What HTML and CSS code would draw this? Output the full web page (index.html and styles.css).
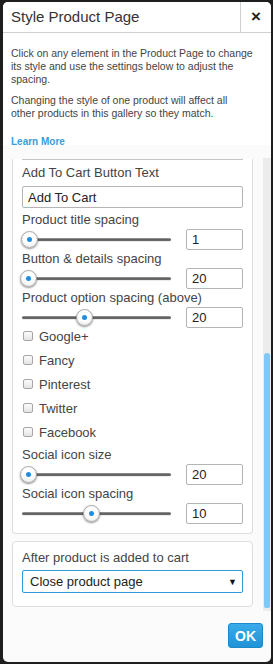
FILE: index.html
```html
<!DOCTYPE html>
<html lang="en">
<head>
  <meta charset="UTF-8" />
  <title>Style Product Page</title>
  <link rel="stylesheet" href="styles.css">
</head>
<body>
  <div class="dialog">
    <div class="dialog-header">
      <h1>Style Product Page</h1>
      <button class="close-btn">&times;</button>
    </div>

    <div class="intro">
      <p>Click on any element in the Product Page to change its style and use the settings below to adjust the spacing.</p>
      <p>Changing the style of one product will affect all<br>other products in this gallery so they match.</p>
      <a href="#" class="learn-more">Learn More</a>
    </div>

    <div class="scroll-area">
      <div class="scroll-content">
        <!-- card is scrolled, top part hidden -->
        <div class="card card-cut">
          <div class="cut-line"></div>
          <label class="field-label first">Add To Cart Button Text</label>
          <input class="text-input" type="text" value="Add To Cart">

          <label class="field-label">Product title spacing</label>
          <div class="slider-row">
            <div class="slider"><span class="thumb" style="left: -1px"></span></div>
            <input class="num-input" type="text" value="1">
          </div>

          <label class="field-label">Button &amp; details spacing</label>
          <div class="slider-row">
            <div class="slider"><span class="thumb" style="left: -2px"></span></div>
            <input class="num-input" type="text" value="20">
          </div>

          <label class="field-label">Product option spacing (above)</label>
          <div class="slider-row">
            <div class="slider"><span class="thumb" style="left: 54px"></span></div>
            <input class="num-input" type="text" value="20">
          </div>

          <div class="check-list">
            <div class="check-row"><span class="check-box"></span>Google+</div>
            <div class="check-row"><span class="check-box"></span>Fancy</div>
            <div class="check-row"><span class="check-box"></span>Pinterest</div>
            <div class="check-row"><span class="check-box"></span>Twitter</div>
            <div class="check-row"><span class="check-box"></span>Facebook</div>
          </div>

          <label class="field-label spaced">Social icon size</label>
          <div class="slider-row">
            <div class="slider"><span class="thumb" style="left: -2px"></span></div>
            <input class="num-input" type="text" value="20">
          </div>

          <label class="field-label">Social icon spacing</label>
          <div class="slider-row">
            <div class="slider"><span class="thumb" style="left: 61px"></span></div>
            <input class="num-input" type="text" value="10">
          </div>
        </div>

        <div class="card card-after">
          <label class="field-label">After product is added to cart</label>
          <div class="select">
            <span>Close product page</span>
            <span class="select-arrow">&#9660;</span>
          </div>
        </div>
      </div>

      <div class="scrollbar">
        <div class="scrollbar-thumb"></div>
      </div>
    </div>

    <div class="dialog-footer">
      <button class="ok-btn">OK</button>
    </div>
  </div>
</body>
</html>
```

FILE: styles.css
```css
html, body {
  margin: 0;
  height: 100%;
}

body {
  background: #1e1e1e;
  padding: 2px 2px 2px 3px;
  box-sizing: border-box;
  font-family: 'Liberation Sans', Arial, sans-serif;
  color: #444;
}

.dialog {
  width: 268px;
  height: 660px;
  background: #fbfbfb;
  border-radius: 5px;
  display: flex;
  flex-direction: column;
  overflow: hidden;
}

.dialog-header {
  display: flex;
  height: 30px;
  background: #fff;
  border-bottom: 1px solid #cfcfcf;
}

.dialog-header h1 {
  flex: 1;
  margin: 0;
  padding-left: 8px;
  font-size: 15px;
  font-weight: normal;
  line-height: 30px;
  color: #333;
}

.close-btn {
  width: 31px;
  border: none;
  border-left: 1px solid #cfcfcf;
  background: none;
  padding: 0;
  font-family: 'Liberation Sans', Arial, sans-serif;
  font-size: 17px;
  font-weight: bold;
  color: #222;
  line-height: 30px;
}

/* intro text */
.intro {
  padding: 14px 9px 0 8px;
  background: #fff;
  height: 112px;
  box-sizing: border-box;
}

.intro p {
  margin: 0 0 8px;
  font-size: 10.5px;
  line-height: 13px;
  color: #444;
}

.learn-more {
  display: block;
  margin-top: 15px;
  font-size: 10px;
  line-height: 13px;
  font-weight: bold;
  color: #3a9cd8;
  text-decoration: none;
}

/* scrolled settings area */
.scroll-area {
  display: flex;
  height: 453px;
  margin-top: 13px;
}

.scroll-content {
  flex: 1;
  padding: 0 10px 0 9px;
  overflow: hidden;
}

.scrollbar {
  width: 8px;
  background: #ececec;
}

.scrollbar-thumb {
  margin: 195px 1px 0;
  height: 255px;
  background: #82c8f7;
  border-radius: 3px 3px 2px 2px;
}

.card {
  background: #fff;
  border: 1px solid #dedede;
  border-radius: 4px;
  padding: 0 9px 9px;
}

.card-cut {
  border-top: none;
  border-radius: 0 0 4px 4px;
}

.cut-line {
  height: 1px;
  margin-top: 1px;
  background: #c6c6c6;
}

.field-label {
  display: block;
  font-size: 13px;
  line-height: 18px;
  color: #444;
}

.field-label.first {
  margin-top: 4px;
}

.field-label.spaced {
  margin-top: 6px;
}

.text-input {
  display: block;
  width: 100%;
  height: 22px;
  box-sizing: border-box;
  margin: 4px 0 3px;
  padding: 0 5px;
  border: 1px solid #b4b4b4;
  border-radius: 2px;
  font-family: 'Liberation Sans', Arial, sans-serif;
  font-size: 13px;
  color: #222;
}

.slider-row {
  display: flex;
  align-items: center;
  justify-content: space-between;
  height: 21px;
}

.slider {
  position: relative;
  width: 149px;
  height: 3px;
  border-radius: 2px;
  background: linear-gradient(#a0a0a0, #555 60%, #777);
  box-shadow: 0 1px 0 rgba(0,0,0,0.08);
}

.thumb {
  position: absolute;
  top: -7px;
  width: 15px;
  height: 15px;
  border-radius: 50%;
  background: radial-gradient(circle at 50% 40%, #fff 40%, #e4e4e4);
  border: 1px solid #a9a9a9;
  box-shadow: 0 1px 2px rgba(0,0,0,0.45);
}

.thumb::after {
  content: "";
  position: absolute;
  left: 5px;
  top: 5px;
  width: 5px;
  height: 5px;
  border-radius: 50%;
  background: #1f8ee0;
}

.num-input {
  width: 57px;
  height: 21px;
  box-sizing: border-box;
  padding: 0 5px;
  border: 1px solid #b4b4b4;
  border-radius: 2px;
  font-family: 'Liberation Sans', Arial, sans-serif;
  font-size: 13px;
  color: #222;
}

.check-list {
  display: flex;
  flex-direction: column;
  gap: 8px;
}

.check-row {
  display: flex;
  align-items: center;
  height: 16px;
  font-size: 13px;
  color: #444;
}

.check-box {
  width: 10px;
  height: 10px;
  box-sizing: border-box;
  margin: 0 6px 0 1px;
  border: 1px solid #a6a6a6;
  border-radius: 2px;
  background: linear-gradient(#fdfdfd, #e3e3e3);
}

.card-after {
  margin-top: 7px;
  padding: 7px 9px 13px;
}

.select {
  display: flex;
  justify-content: space-between;
  align-items: center;
  height: 23px;
  box-sizing: border-box;
  margin-top: 3px;
  padding: 0 5px 0 7px;
  border: 1px solid #3399dd;
  border-radius: 2px;
  background: #fff;
  font-size: 13px;
  color: #222;
}

.select-arrow {
  font-size: 9px;
  color: #111;
}

.dialog-footer {
  display: flex;
  justify-content: flex-end;
  padding: 12px 8px 0;
}

.ok-btn {
  width: 35px;
  height: 25px;
  padding: 0;
  border: 1px solid #1c88c8;
  border-radius: 3px;
  background: linear-gradient(#39abe9, #1f93d6);
  color: #fff;
  font-family: 'Liberation Sans', Arial, sans-serif;
  font-size: 14px;
  font-weight: bold;
}
```
